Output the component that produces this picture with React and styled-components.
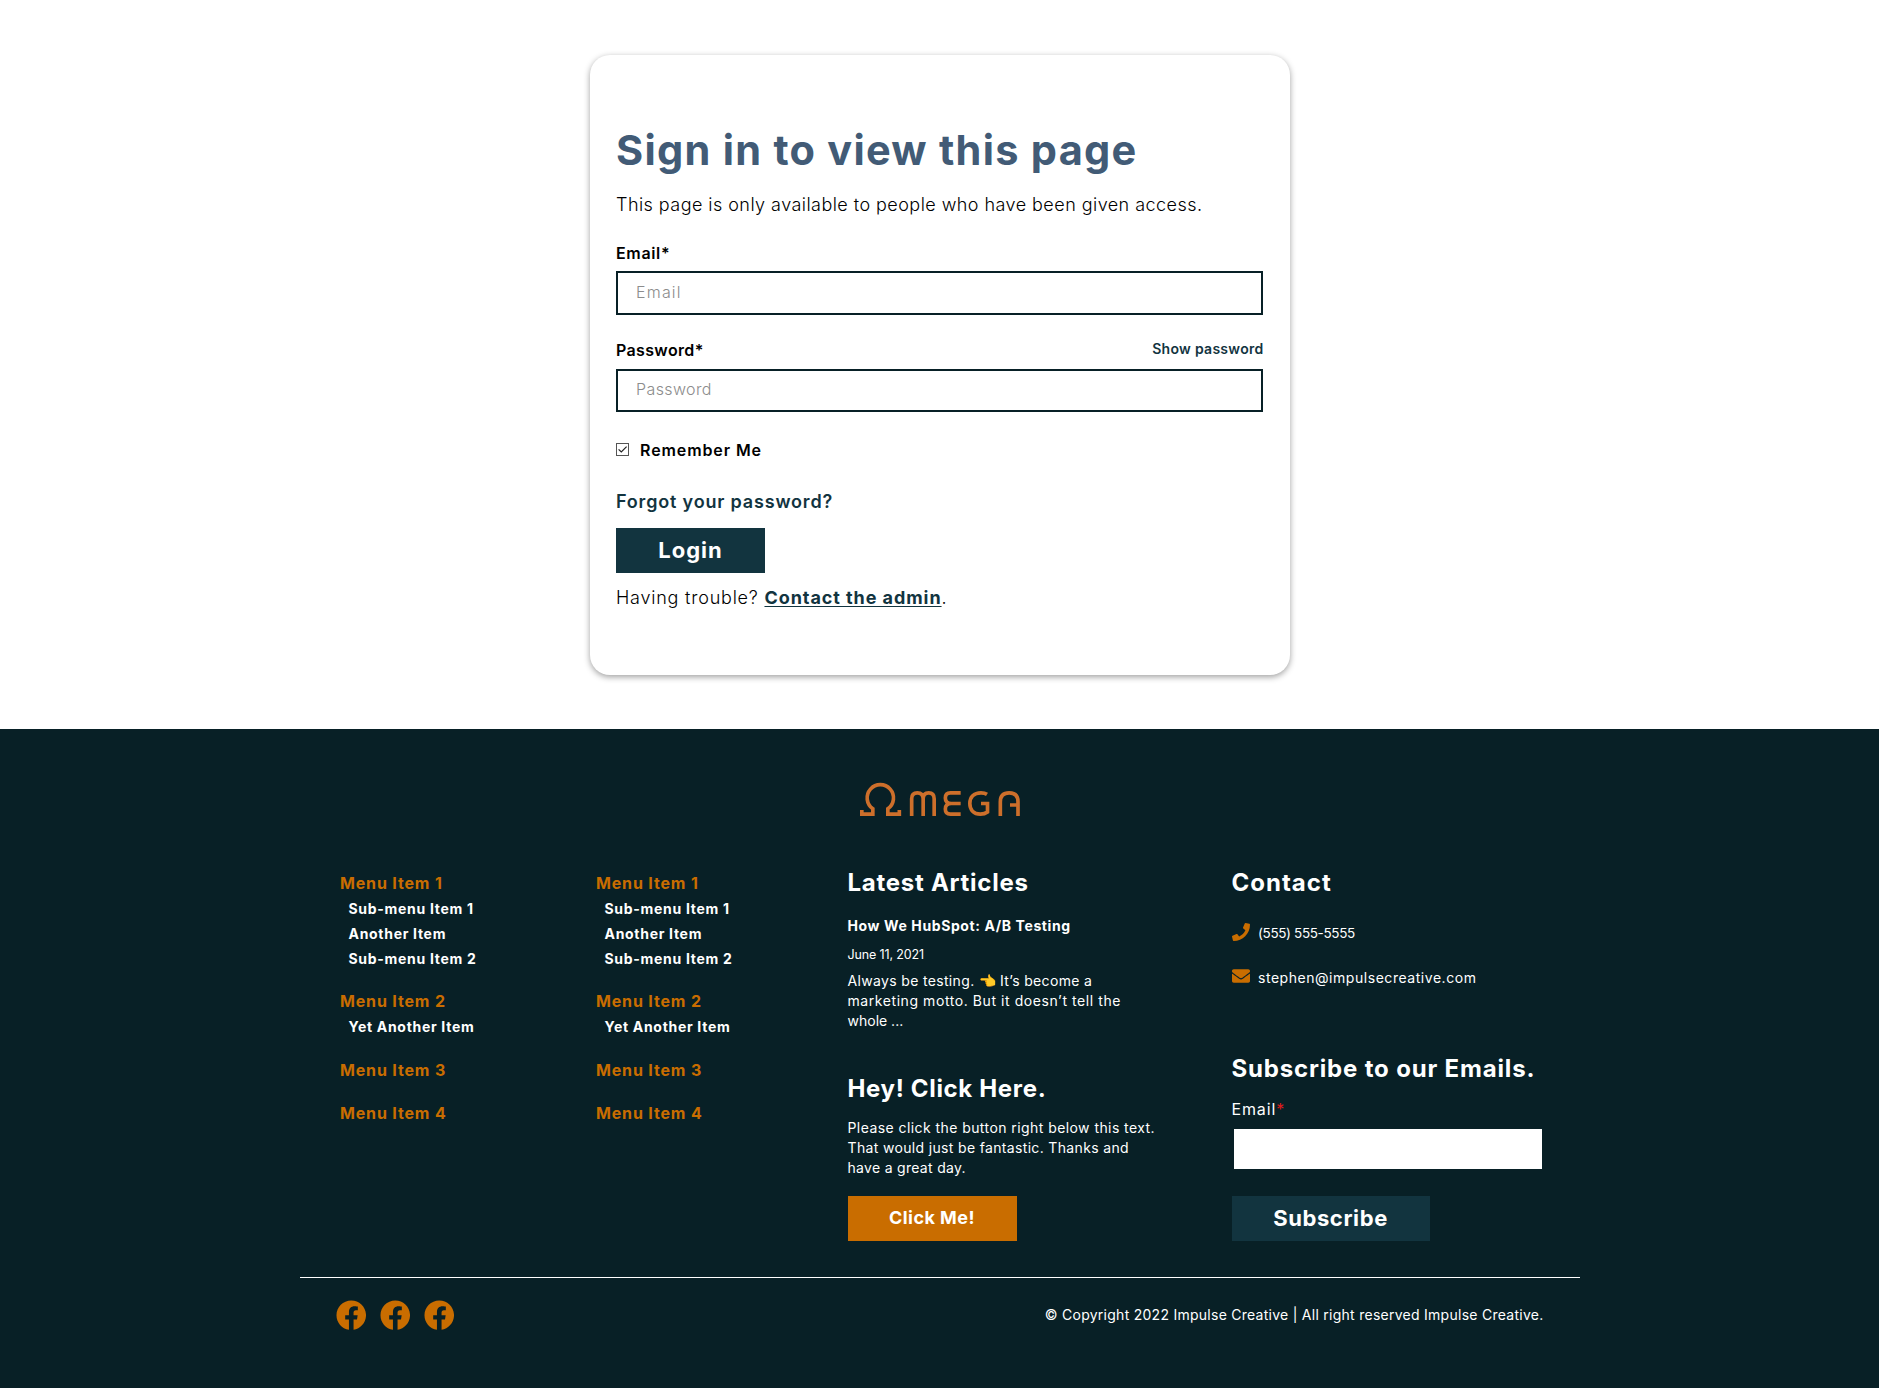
import React, { useState } from "react";
import styled, { createGlobalStyle } from "styled-components";
import { FaPhone, FaEnvelope, FaFacebook } from "react-icons/fa";

const ink = "#082026";
const teal = "#12343f";
const orange = "#c96d00";

const GlobalStyle = createGlobalStyle`
  * { box-sizing: border-box; }
  body {
    margin: 0;
    background: #fff;
    color: #000;
    font-family: Inter, "Open Sans", sans-serif;
    white-space: nowrap;
  }
  h1, h2, h3, p, ul { margin: 0; padding: 0; }
  ul { list-style: none; }
  button, input { font-family: inherit; border: 0; border-radius: 0; }
  a { color: inherit; text-decoration: none; }
  svg { display: block; }
`;

const Page = styled.div`
  display: flex;
  flex-direction: column;
  min-height: 1388px;
`;

const SignInSection = styled.main`
  display: flex;
  justify-content: center;
  padding: 55px 0 54px;
`;

const Card = styled.form`
  width: 700px;
  height: 620px;
  padding: 70px 26px 0 26.5px;
  border-radius: 20px;
  background: #fff;
  box-shadow: 0 2px 6px rgba(0, 0, 0, 0.38);
`;

const Title = styled.h1`
  font-size: 41.5px;
  line-height: 50px;
  font-weight: 700;
  letter-spacing: 1.27px;
  color: #425b76;
`;

const Lead = styled.p`
  margin-top: 16px;
  font-size: 18px;
  line-height: 28px;
  font-weight: 300;
  letter-spacing: 0.45px;
`;

const FieldHead = styled.div`
  display: flex;
  justify-content: space-between;
  align-items: flex-start;
  height: 24px;
  margin-top: ${(p) => p.$top}px;
  margin-bottom: ${(p) => p.$bottom}px;
`;

const Label = styled.label`
  font-size: 16px;
  line-height: 22px;
  font-weight: 600;
  letter-spacing: ${(p) => p.$ls}px;
`;

const ShowPassword = styled.a`
  font-size: 14px;
  line-height: 20px;
  font-weight: 600;
  letter-spacing: 0.28px;
  color: ${teal};
`;

const TextInput = styled.input`
  display: block;
  width: 647px;
  height: ${(p) => p.$height}px;
  padding: 0 18px ${(p) => p.$drop}px;
  border: 2px solid ${ink};
  background: #fff;
  font-size: 16px;
  font-weight: 300;
  outline: none;
  &::placeholder {
    color: #8c8c8c;
    opacity: 1;
    letter-spacing: ${(p) => p.$ls}px;
  }
`;

const RememberRow = styled.div`
  display: flex;
  align-items: flex-start;
  gap: 11px;
  height: 24px;
  margin-top: 27px;
`;

const CheckBox = styled.span`
  display: flex;
  width: 13px;
  height: 13px;
  margin-top: 4px;
  border: 1px solid #555;
  background: #fff;
`;

const Forgot = styled.a`
  display: block;
  margin-top: 25px;
  font-size: 18px;
  line-height: 28px;
  font-weight: 600;
  letter-spacing: 0.82px;
  color: ${teal};
`;

const Button = styled.button`
  display: flex;
  align-items: center;
  justify-content: center;
  width: ${(p) => p.$width}px;
  height: 45px;
  margin-top: ${(p) => p.$top}px;
  padding: 0 0 2px;
  background: ${(p) => p.$bg || teal};
  color: #fff;
  font-size: ${(p) => p.$size || 22}px;
  font-weight: 700;
  letter-spacing: ${(p) => p.$ls}px;
`;

const Trouble = styled.p`
  margin-top: 11px;
  font-size: 18px;
  line-height: 28px;
  font-weight: 300;
  letter-spacing: 0.78px;
`;

const AdminLink = styled.a`
  font-weight: 700;
  letter-spacing: 0.93px;
  color: ${teal};
  text-decoration: underline;
  text-decoration-thickness: 1px;
  text-underline-offset: 2px;
`;

const Footer = styled.footer`
  flex: 1;
  display: flex;
  flex-direction: column;
  align-items: center;
  padding-top: 53px;
  background: ${ink};
  color: #fff;
`;

const Columns = styled.div`
  display: grid;
  grid-template-columns: 256px 251.5px 384px 1fr;
  width: 1280px;
  height: 410px;
  margin-top: 52px;
  padding-left: 40.5px;
  border-bottom: 1px solid #fff;
`;

const Column = styled.section`
  min-width: 0;
`;

const Menu = styled.ul`
  display: flex;
  flex-direction: column;
  gap: 18.3px;
  padding-top: 3px;
`;

const MenuTitle = styled.a`
  display: block;
  font-size: 16px;
  line-height: 25px;
  font-weight: 700;
  letter-spacing: 0.84px;
  color: ${orange};
`;

const SubMenu = styled.ul`
  padding-left: 8.5px;
`;

const SubItem = styled.li`
  font-size: 14px;
  line-height: 25px;
  font-weight: 700;
  letter-spacing: 0.7px;
`;

const Heading = styled.h2`
  margin-top: ${(p) => p.$top || 0}px;
  font-size: 24px;
  line-height: 30px;
  font-weight: 700;
  letter-spacing: ${(p) => p.$ls}px;
`;

const ArticleTitle = styled.h3`
  margin-top: 16px;
  font-size: 14px;
  line-height: 24px;
  font-weight: 700;
  letter-spacing: 0.61px;
`;

const ArticleDate = styled.p`
  margin-top: 7px;
  font-size: 12.5px;
  line-height: 20px;
  letter-spacing: -0.14px;
`;

const Copy = styled.p`
  margin-top: ${(p) => p.$top}px;
  font-size: 14px;
  line-height: 20px;
`;

const Line = styled.span`
  display: block;
  height: 20px;
  letter-spacing: ${(p) => p.$ls}px;
`;

const Emoji = styled.span`
  display: inline-block;
  width: 16px;
  margin: 0 5px 0 4.5px;
  font-size: 14px;
  letter-spacing: 0;
`;

const ContactRow = styled.div`
  display: flex;
  align-items: flex-start;
  gap: 8.5px;
  height: 24px;
  margin-top: ${(p) => p.$top}px;
  font-size: ${(p) => p.$size}px;
  line-height: 24px;
  letter-spacing: ${(p) => p.$ls}px;
  svg {
    margin-top: ${(p) => p.$icon}px;
    color: ${orange};
  }
`;

const SubscribeLabel = styled.label`
  display: block;
  height: 24px;
  margin-top: 14px;
  font-size: 16px;
  line-height: 22px;
  letter-spacing: 0.85px;
`;

const Required = styled.span`
  color: #e01b1b;
`;

const SubscribeInput = styled.input`
  display: block;
  width: 308px;
  height: 40px;
  margin: 7px 0 0 2px;
  padding: 0 12px;
  background: #fff;
  outline: none;
`;

const BottomBar = styled.div`
  display: flex;
  justify-content: space-between;
  width: 1280px;
  padding: 21.5px 36px 0;
`;

const Socials = styled.div`
  display: flex;
  gap: 13.5px;
  color: ${orange};
`;

const Copyright = styled.p`
  padding-top: 5.5px;
  font-size: 14px;
  line-height: 20px;
  letter-spacing: 0.265px;
`;

const Logo = () => (
  <svg width="160" height="34" viewBox="60 66 480 102" fill="none" stroke="#cd6f2b" strokeWidth="11">
    <path d="M65.5 150V162.5H98.5V146A39.5 39.5 0 1 1 143.5 146V162.5H178V150" />
    <path d="M215 168V116Q215 98.5 232 98.5T249.5 116V168M249.5 116Q249.5 98.5 266 98.5T282.5 116V168" />
    <path d="M362 98.5H331Q316 98.5 316 114Q316 130.5 334 130.5H362M334 130.5Q316 130.5 316 147Q316 162.5 331 162.5H362" />
    <path d="M441 103Q434 98.500 423 98.5C401 98.5 389.5 112 389.5 130.5S401 162.5 421 162.5Q434 162.5 442.5 156V130.5H423" />
    <path d="M481 168V125Q481 98.5 507.5 98.5T534 125V168M534 135H510" />
  </svg>
);

const Tick = () => (
  <svg width="11" height="11" viewBox="0 0 11 11" fill="none" stroke="#222" strokeWidth="1.2">
    <path d="M1.6 5.3L4.3 8L9.6 2.7" />
  </svg>
);

const menu = [
  { title: "Menu Item 1", items: ["Sub-menu Item 1", "Another Item", "Sub-menu Item 2"] },
  { title: "Menu Item 2", items: ["Yet Another Item"] },
  { title: "Menu Item 3", items: [] },
  { title: "Menu Item 4", items: [] },
];

const FooterMenu = () => (
  <Menu>
    {menu.map((m) => (
      <li key={m.title}>
        <MenuTitle href="#">{m.title}</MenuTitle>
        <SubMenu>
          {m.items.map((item) => (
            <SubItem key={item}>{item}</SubItem>
          ))}
        </SubMenu>
      </li>
    ))}
  </Menu>
);

export default function App() {
  const [remember, setRemember] = useState(true);
  return (
    <Page>
      <GlobalStyle />
      <SignInSection>
        <Card>
          <Title>Sign in to view this page</Title>
          <Lead>This page is only available to people who have been given access.</Lead>
          <FieldHead $top={23} $bottom={5}>
            <Label $ls={0.65}>Email*</Label>
          </FieldHead>
          <TextInput type="email" placeholder="Email" $height={44} $drop={2} $ls={1.2} />
          <FieldHead $top={24} $bottom={6}>
            <Label $ls={0.35}>Password*</Label>
            <ShowPassword href="#">Show password</ShowPassword>
          </FieldHead>
          <TextInput type="password" placeholder="Password" $height={43} $drop={4} $ls={0.4} />
          <RememberRow onClick={() => setRemember(!remember)}>
            <CheckBox>{remember && <Tick />}</CheckBox>
            <Label $ls={0.9}>Remember Me</Label>
          </RememberRow>
          <Forgot href="#">Forgot your password?</Forgot>
          <Button type="button" $width={149} $top={12} $ls={1}>Login</Button>
          <Trouble>
            Having trouble? <AdminLink href="#">Contact the admin</AdminLink>.
          </Trouble>
        </Card>
      </SignInSection>

      <Footer>
        <Logo />
        <Columns>
          <Column>
            <FooterMenu />
          </Column>
          <Column>
            <FooterMenu />
          </Column>
          <Column>
            <Heading $ls={0.74}>Latest Articles</Heading>
            <ArticleTitle>How We HubSpot: A/B Testing</ArticleTitle>
            <ArticleDate>June 11, 2021</ArticleDate>
            <Copy $top={6}>
              <Line $ls={0.34}>
                Always be testing.<Emoji>👈</Emoji>It’s become a
              </Line>
              <Line $ls={0.57}>marketing motto. But it doesn’t tell the</Line>
              <Line $ls={0}>whole ...</Line>
            </Copy>
            <Heading $top={43} $ls={0.66}>Hey! Click Here.</Heading>
            <Copy $top={14}>
              <Line $ls={0.43}>Please click the button right below this text.</Line>
              <Line $ls={0.34}>That would just be fantastic. Thanks and</Line>
              <Line $ls={0.3}>have a great day.</Line>
            </Copy>
            <Button type="button" $width={169} $top={18} $ls={0.45} $size={18} $bg={orange}>
              Click Me!
            </Button>
          </Column>
          <Column>
            <Heading $ls={1}>Contact</Heading>
            <ContactRow $top={23} $icon={2} $size={13.5} $ls={-0.363}>
              <FaPhone size={18} />
              <span>(555) 555-5555</span>
            </ContactRow>
            <ContactRow $top={21} $icon={1} $size={14} $ls={0.54}>
              <FaEnvelope size={18} />
              <span>stephen@impulsecreative.com</span>
            </ContactRow>
            <Heading $top={64} $ls={0.83}>Subscribe to our Emails.</Heading>
            <SubscribeLabel>
              Email<Required>*</Required>
            </SubscribeLabel>
            <SubscribeInput type="email" />
            <Button type="button" $width={198} $top={27} $ls={0.6}>Subscribe</Button>
          </Column>
        </Columns>
        <BottomBar>
          <Socials>
            <FaFacebook size={30.5} />
            <FaFacebook size={30.5} />
            <FaFacebook size={30.5} />
          </Socials>
          <Copyright>© Copyright 2022 Impulse Creative | All right reserved Impulse Creative.</Copyright>
        </BottomBar>
      </Footer>
    </Page>
  );
}
